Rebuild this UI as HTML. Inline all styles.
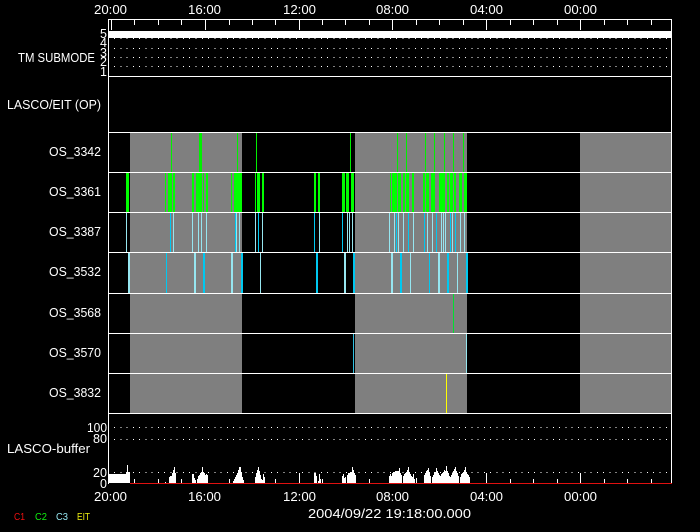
<!DOCTYPE html>
<html><head><meta charset="utf-8"><style>
html,body{margin:0;padding:0;background:#000;width:700px;height:532px;overflow:hidden}
svg{display:block}
text{font-family:"Liberation Sans",sans-serif;font-size:12.5px;fill:#fff}
path,rect{shape-rendering:crispEdges}
path{fill:none}
</style></head><body>
<svg width="700" height="532" viewBox="0 0 700 532" xmlns="http://www.w3.org/2000/svg">
<rect width="700" height="532" fill="#000"/>
<!-- gray bands -->
<path stroke="#7f7f7f" stroke-width="281" d="M130 273h112M355 273h112M580 273h91"/>
<!-- row 1 -->
<path stroke="#00f000" stroke-width="40" d="M171 152h1M199 152h3M237 152h1M256 152h1M350 152h1M397 152h1M406 152h1M425 152h1M434 152h1M444 152h1M453 152h1M463 152h1"/>
<!-- row 2 -->
<path stroke="#00ff00" stroke-width="40" d="M126 192h3M165 192h1M168 192h4M173 192h2M192 192h2M196 192h4M200 192h2M203 192h1M206 192h2M231 192h1M234 192h8M255 192h1M257 192h3M262 192h2M314 192h2M318 192h2M342 192h3M346 192h3M351 192h3M390 192h1M392 192h2M394 192h3M398 192h3M403 192h2M406 192h3M412 192h2M423 192h2M426 192h3M431 192h4M439 192h3M442 192h3M447 192h2M450 192h3M454 192h2M459 192h3M464 192h3"/>
<!-- row 3 -->
<path stroke="#00c8f0" stroke-width="40" d="M170 232h1M235 232h1M258 232h1M314 232h1M342 232h1M396 232h1M408 232h1M424 232h1M436 232h1M450 232h1M455 232h1"/>
<path stroke="#96e6f0" stroke-width="40" d="M126 232h1M173 232h1M192 232h1M198 232h1M201 232h1M206 232h1M236 232h1M239 232h1M255 232h1M262 232h1M319 232h1M347 232h1M349 232h1M352 232h1M389 232h1M394 232h1M398 232h1M403 232h1M413 232h1M427 232h1M432 232h1M441 232h1M443 232h1M445 232h1M452 232h1M460 232h1M464 232h1"/>
<!-- row 4 -->
<path stroke="#00c8f0" stroke-width="41" d="M166 272.5h1M203 272.5h2M241 272.5h2M316 272.5h2M353 272.5h2M400 272.5h2M429 272.5h1M447 272.5h2M466 272.5h2"/>
<path stroke="#96e6f0" stroke-width="41" d="M128 272.5h2M194 272.5h2M231 272.5h2M260 272.5h1M344 272.5h2M391 272.5h2M410 272.5h1M438 272.5h2M457 272.5h1"/>
<!-- rows 5-7 -->
<path stroke="#00e030" stroke-width="40" d="M453 313h1"/>
<path stroke="#30c0e0" stroke-width="40" d="M353 353h1"/>
<path stroke="#96e6f0" stroke-width="40" d="M466 353h1"/>
<path stroke="#ffff00" stroke-width="40" d="M446 393h1"/>
<!-- horizontals -->
<path stroke="#fff" stroke-width="1" d="M108 19.5H672M108 76.5H672M108 132.5H672M108 172.5H672M108 212.5H672M108 252.5H672M108 293.5H672M108 333.5H672M108 373.5H672M108 413.5H672M108.5 19V484M671.5 19V484"/>
<rect x="108" y="31" width="564" height="7" fill="#fff"/>
<!-- top ticks -->
<path stroke="#fff" d="M111.5 20v10M205.5 20v10M299.5 20v10M392.5 20v10M486.5 20v10M580.5 20v10M134.5 20v5M158.5 20v5M181.5 20v5M229.5 20v5M252.5 20v5M275.5 20v5M322.5 20v5M345.5 20v5M369.5 20v5M416.5 20v5M439.5 20v5M463.5 20v5M510.5 20v5M533.5 20v5M557.5 20v5M604.5 20v5M627.5 20v5M651.5 20v5"/>
<!-- dotted -->
<path stroke="#fff" stroke-dasharray="1 5.27" d="M114 38.5H669M114 48.5H669M114 57.5H669M114 66.5H669M114 427.5H669M114 439.5H669M114 472.5H669"/>
<!-- bottom ticks -->
<path stroke="#fff" d="M299.5 483V473M392.5 483V473M486.5 483V473M580.5 483V473M134.5 483V479M158.5 483V479M181.5 483V479M229.5 483V479M275.5 483V479M322.5 483V479M345.5 483V479M369.5 483V479M416.5 483V479M510.5 483V479M533.5 483V479M557.5 483V479M604.5 483V479M627.5 483V479M651.5 483V479"/>
<!-- histogram -->
<rect x="109" y="474" width="21" height="9" fill="#fff"/>
<path stroke="#fff" d="M127.5 474V465M126.5 474V472M128.5 474V472M129.5 474V472M165.5 483V482
M169.5 483V477M170.5 483V476M171.5 483V476M172.5 483V473M173.5 483V470M174.5 483V467M175.5 483V473
M192.5 483V474M193.5 483V474M194.5 483V478M195.5 483V480M197.5 483V479M198.5 483V476M199.5 483V475M200.5 483V473M201.5 483V472M202.5 483V467M203.5 483V472M204.5 483V473M205.5 483V475M206.5 483V474M207.5 483V475
M233.5 483V481M234.5 483V479M235.5 483V477M236.5 483V475M237.5 483V473M238.5 483V470M239.5 483V467M240.5 483V467M241.5 483V472M242.5 483V477M243.5 483V480
M255.5 483V477M256.5 483V473M257.5 483V470M258.5 483V467M259.5 483V471M260.5 483V475M261.5 483V479M262.5 483V480M263.5 483V474M264.5 483V477
M314.5 483V473M315.5 483V473M316.5 483V476M318.5 483V481M319.5 483V474M320.5 483V479M322.5 483V479
M342.5 483V476M343.5 483V474M344.5 483V478M345.5 483V477M347.5 483V475M348.5 483V473M349.5 483V473M350.5 483V472M351.5 483V472M352.5 483V467M353.5 483V470M354.5 483V473M355.5 483V475
M389.5 483V476M390.5 483V474M391.5 483V476M392.5 483V473M393.5 483V472M394.5 483V472M395.5 483V471M396.5 483V471M397.5 483V471M398.5 483V471M399.5 483V468M400.5 483V473M401.5 483V475
M403.5 483V476M404.5 483V474M405.5 483V473M406.5 483V472M407.5 483V470M408.5 483V467M409.5 483V472M410.5 483V474M411.5 483V476M412.5 483V477M413.5 483V474M414.5 483V479M416.5 483V478
M424.5 483V475M425.5 483V473M426.5 483V471M427.5 483V470M428.5 483V468M429.5 483V472M430.5 483V476
M432.5 483V477M433.5 483V475M434.5 483V473M435.5 483V472M436.5 483V468M437.5 483V471M438.5 483V473M439.5 483V475M440.5 483V476
M441.5 483V474M442.5 483V473M443.5 483V472M444.5 483V470M445.5 483V471M446.5 483V466M447.5 483V471M448.5 483V473M449.5 483V476
M450.5 483V477M451.5 483V475M452.5 483V473M453.5 483V471M454.5 483V469M455.5 483V467M456.5 483V471M457.5 483V473M458.5 483V476
M460.5 483V477M461.5 483V474M462.5 483V473M463.5 483V472M464.5 483V470M465.5 483V467M466.5 483V472M467.5 483V474M468.5 483V475M469.5 483V477"/>
<rect x="130" y="483" width="542" height="1" fill="#e01010"/>
<!-- top labels -->
<text x="94" y="14" textLength="33" lengthAdjust="spacingAndGlyphs">20:00</text>
<text x="188" y="14" textLength="33" lengthAdjust="spacingAndGlyphs">16:00</text>
<text x="283" y="14" textLength="33" lengthAdjust="spacingAndGlyphs">12:00</text>
<text x="376" y="14" textLength="33" lengthAdjust="spacingAndGlyphs">08:00</text>
<text x="470" y="14" textLength="33" lengthAdjust="spacingAndGlyphs">04:00</text>
<text x="564" y="14" textLength="33" lengthAdjust="spacingAndGlyphs">00:00</text>
<!-- bottom labels -->
<text x="94" y="501" textLength="33" lengthAdjust="spacingAndGlyphs">20:00</text>
<text x="188" y="501" textLength="33" lengthAdjust="spacingAndGlyphs">16:00</text>
<text x="283" y="501" textLength="33" lengthAdjust="spacingAndGlyphs">12:00</text>
<text x="376" y="501" textLength="33" lengthAdjust="spacingAndGlyphs">08:00</text>
<text x="470" y="501" textLength="33" lengthAdjust="spacingAndGlyphs">04:00</text>
<text x="564" y="501" textLength="33" lengthAdjust="spacingAndGlyphs">00:00</text>
<!-- y digits -->
<text x="100" y="38">5</text>
<text x="100" y="47">4</text>
<text x="100" y="57">3</text>
<text x="100" y="66">2</text>
<text x="100" y="76">1</text>
<text x="18" y="62" textLength="77" lengthAdjust="spacingAndGlyphs">TM SUBMODE</text>
<text x="7" y="109" textLength="94" lengthAdjust="spacingAndGlyphs">LASCO/EIT (OP)</text>
<text x="49" y="156" textLength="52" lengthAdjust="spacingAndGlyphs">OS_3342</text>
<text x="49" y="196" textLength="52" lengthAdjust="spacingAndGlyphs">OS_3361</text>
<text x="49" y="236" textLength="52" lengthAdjust="spacingAndGlyphs">OS_3387</text>
<text x="49" y="276" textLength="52" lengthAdjust="spacingAndGlyphs">OS_3532</text>
<text x="49" y="317" textLength="52" lengthAdjust="spacingAndGlyphs">OS_3568</text>
<text x="49" y="357" textLength="52" lengthAdjust="spacingAndGlyphs">OS_3570</text>
<text x="49" y="397" textLength="52" lengthAdjust="spacingAndGlyphs">OS_3832</text>
<text x="7" y="453" textLength="83" lengthAdjust="spacingAndGlyphs">LASCO-buffer</text>
<text x="87" y="432" textLength="20" lengthAdjust="spacingAndGlyphs">100</text>
<text x="93" y="443" textLength="14" lengthAdjust="spacingAndGlyphs">80</text>
<text x="93" y="477" textLength="14" lengthAdjust="spacingAndGlyphs">20</text>
<text x="100" y="488">0</text>
<text x="308" y="518" textLength="163" lengthAdjust="spacingAndGlyphs">2004/09/22 19:18:00.000</text>
<text x="14" y="520" textLength="11" lengthAdjust="spacingAndGlyphs" style="font-size:10px;fill:#f01010">C1</text>
<text x="35" y="520" textLength="12" lengthAdjust="spacingAndGlyphs" style="font-size:10px;fill:#10f010">C2</text>
<text x="56" y="520" textLength="12" lengthAdjust="spacingAndGlyphs" style="font-size:10px;fill:#96e6f0">C3</text>
<text x="77" y="520" textLength="13" lengthAdjust="spacingAndGlyphs" style="font-size:10px;fill:#f0f010">EIT</text>
</svg>
</body></html>
